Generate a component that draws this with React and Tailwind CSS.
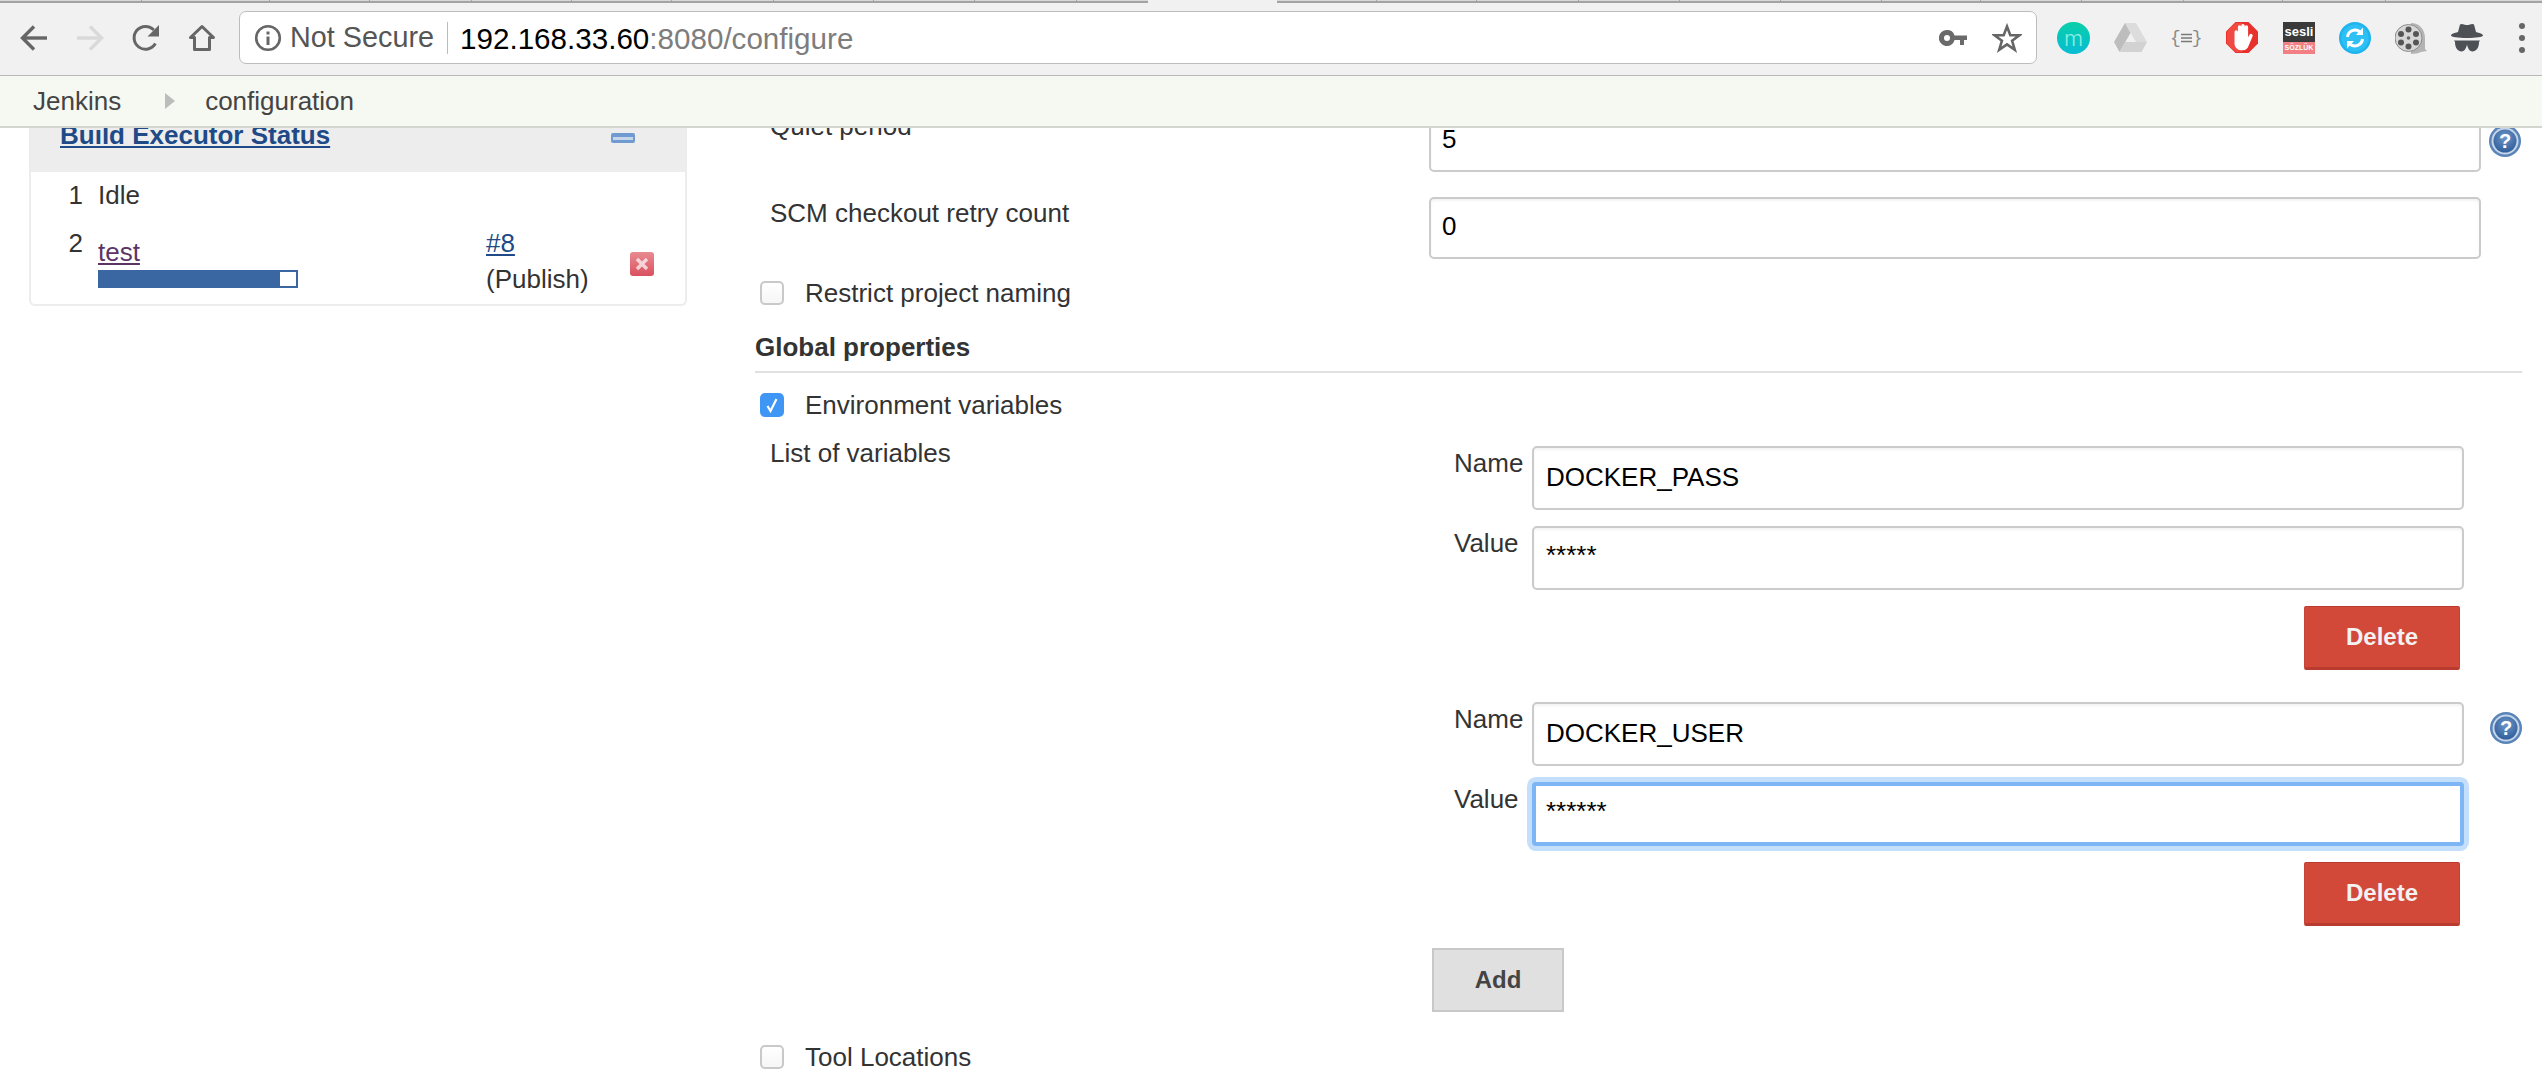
const FONT = "font-['Liberation_Sans',Arial,sans-serif]";

const TAB_ENDS = [142, 270, 370, 472, 572, 672, 774, 874, 975, 1077];
const TAB_ENDS_2 = [1377, 1477, 1579, 1680, 1781, 1882, 1981, 2082, 2184, 2283, 2386];

function TabStrip() {
  const seg = (ends, start) =>
    ends.map((e, i) => (
      <div
        key={e}
        className="h-[3px] shrink-0 bg-[#d8d8d8] border-b-2 border-r border-[#a3a3a3]"
        style={{ width: e - (i === 0 ? start : ends[i - 1]) }}
      />
    ));
  return (
    <div className="flex h-[3px] bg-[#f1f1f1]">
      {seg(TAB_ENDS, 0)}
      <div className="h-[3px] w-[71px] shrink-0 bg-[#d8d8d8] border-b-2 border-[#a3a3a3]" />
      <div className="h-[3px] w-[129px] shrink-0 bg-[#f1f1f1]" />
      {seg(TAB_ENDS_2, 1277)}
      <div className="h-[3px] flex-1 bg-[#d8d8d8] border-b-2 border-[#a3a3a3]" />
    </div>
  );
}

function Back({ color }) {
  return (
    <svg width="28" height="28" viewBox="0 0 28 28" fill="none" stroke={color} strokeWidth="3.4" className="shrink-0">
      <path d="M27 14H3" />
      <path d="M14 2.5L2.5 14L14 25.5" />
    </svg>
  );
}

function Forward({ color }) {
  return (
    <svg width="28" height="28" viewBox="0 0 28 28" fill="none" stroke={color} strokeWidth="3.4" className="shrink-0 ml-[28px]">
      <path d="M1 14H25" />
      <path d="M14 2.5L25.5 14L14 25.5" />
    </svg>
  );
}

function Reload() {
  return (
    <svg width="28" height="28" viewBox="0 0 28 28" fill="none" className="shrink-0 ml-[28px]">
      <path d="M23.4 19.5A11.4 11.4 0 1 1 21.8 6" stroke="#666" strokeWidth="3" />
      <path d="M27 1V12.5H15.5Z" fill="#666" />
    </svg>
  );
}

function Home() {
  return (
    <svg width="28" height="28" viewBox="0 0 28 28" fill="none" stroke="#666" strokeWidth="3" className="shrink-0 ml-[28px]">
      <path d="M2.5 13.5L14 2.5L25.5 13.5H21.5V25.5H6.5V13.5Z" strokeLinejoin="round" />
    </svg>
  );
}

function Info() {
  return (
    <svg width="28" height="28" viewBox="0 0 28 28" fill="none" className="shrink-0">
      <circle cx="14" cy="14" r="11.8" stroke="#666" strokeWidth="2.6" />
      <rect x="12.5" y="12.5" width="3" height="8.5" fill="#666" />
      <rect x="12.5" y="7.5" width="3" height="3" fill="#666" />
    </svg>
  );
}

function KeyIcon() {
  return (
    <svg width="28" height="16" viewBox="0 0 28 16" className="shrink-0">
      <path
        fillRule="evenodd"
        d="M8 0a8 8 0 0 1 7.6 5.4H28V10h-3v5h-4v-5h-5.4A8 8 0 1 1 8 0Zm0 5a3 3 0 1 0 0 6 3 3 0 0 0 0-6Z"
        fill="#6a6a6a"
      />
    </svg>
  );
}

function Star() {
  return (
    <svg width="30" height="30" viewBox="0 0 30 30" fill="none" stroke="#666" strokeWidth="2.6" className="shrink-0 ml-[25px]">
      <path d="M15 3.5L18.3 12.2H27.5L20.1 17.8L22.8 26.8L15 21.4L7.2 26.8L9.9 17.8L2.5 12.2H11.7Z" strokeLinejoin="miter" />
    </svg>
  );
}

function MIcon() {
  return (
    <div className="ml-[20px] flex h-[32px] w-[33px] shrink-0 items-center justify-center rounded-full bg-gradient-to-b from-[#0ccfa8] to-[#0bbcd4] text-[22px] leading-none font-light text-[#8eeee4] font-['Inter',sans-serif]">
      m
    </div>
  );
}

function DriveIcon() {
  return (
    <svg width="33" height="29" viewBox="0 0 33 29" className="ml-[24px] shrink-0">
      <path d="M11 0H22L33 19H22Z" fill="#dcdcdc" />
      <path d="M11 0L0 19L5.5 29L16.5 10Z" fill="#bdbdbd" />
      <path d="M5.5 29H27.5L33 19H11Z" fill="#d2d2d2" />
    </svg>
  );
}

function JsonIcon() {
  return (
    <div className="ml-[25px] flex h-[20px] w-[27px] shrink-0 items-center justify-between text-[18px] leading-none text-[#8a8a8a] font-['Liberation_Mono',monospace]">
      <span className="-ml-[2px]">{"{"}</span>
      <svg width="11" height="10" viewBox="0 0 11 10" stroke="#7a7a7a" strokeWidth="1.3" className="shrink-0">
        <path d="M0 1.5H11M0 5H11M0 8.5H11" />
      </svg>
      <span className="-mr-[2px]">{"}"}</span>
    </div>
  );
}

function AdBlock() {
  return (
    <svg width="32" height="31" viewBox="0 0 32 31" className="ml-[27px] shrink-0">
      <path d="M9.5 0H22.5L32 9.5V21.5L22.5 31H9.5L0 21.5V9.5Z" fill="#e8302c" />
      <path d="M9.5 1H16V30H9.5L1 21.5V9.5Z" fill="#f04a42" />
      <path
        d="M8.5 10a1.7 1.7 0 0 1 3.4 0V5a1.7 1.7 0 0 1 3.4 0V3.600a1.700 1.700 0 0 1 3.400 0V5a1.700 1.700 0 0 1 3.400 0v10.200l1.400-2.400a1.700 1.700 0 0 1 3 1.600L22.500 24a6 6 0 0 1-5.500 4.200H15a6.500 6.500 0 0 1-6.500-6.500Z"
        fill="#fff"
      />
    </svg>
  );
}

function Sesli() {
  return (
    <div className="ml-[25px] flex h-[32px] w-[32px] shrink-0 flex-col overflow-hidden font-['Liberation_Sans',sans-serif]">
      <div className="flex h-[20px] items-center justify-center bg-[#3a3a3a] text-[13px] leading-none font-bold text-white">sesli</div>
      <div className="flex h-[12px] items-center justify-center bg-[#f17f83] text-[7px] leading-none font-bold text-white">SÖZLÜK</div>
    </div>
  );
}

function Sync() {
  return (
    <svg width="32" height="32" viewBox="0 0 32 32" fill="none" className="ml-[24px] shrink-0">
      <circle cx="16" cy="16" r="16" fill="#1fb4ee" />
      <circle cx="16" cy="16" r="13.5" fill="#2cc0f4" />
      <path d="M8.5 15A7.6 7.6 0 0 1 21 10" stroke="#fff" strokeWidth="3" />
      <path d="M23.5 17A7.6 7.6 0 0 1 11 22" stroke="#fff" strokeWidth="3" />
      <path d="M24 5.5V13H17Z" fill="#fff" />
      <path d="M8 26.5V19H15Z" fill="#fff" />
    </svg>
  );
}

function Reel() {
  return (
    <svg width="32" height="32" viewBox="0 0 32 32" className="ml-[24px] shrink-0">
      <path d="M16 1C24 1 30 7 30 16V27L32 29L26 30C24 31 20 32 16 32Z" fill="#b4b4b4" />
      <circle cx="13.5" cy="16" r="13.5" fill="#d6d6d6" stroke="#8a8a8a" strokeWidth="1" />
      <circle cx="13.5" cy="16" r="1.8" fill="#666" />
      <circle cx="13.5" cy="7.5" r="3" fill="#555" />
      <circle cx="13.5" cy="24.5" r="3" fill="#555" />
      <circle cx="6" cy="12" r="3" fill="#555" />
      <circle cx="21" cy="12" r="3" fill="#555" />
      <circle cx="6" cy="20.5" r="3" fill="#555" />
      <circle cx="21" cy="20.5" r="3" fill="#555" />
    </svg>
  );
}

function Incognito() {
  return (
    <svg width="32" height="29" viewBox="0 0 32 29" className="ml-[24px] shrink-0" fill="#4d5054">
      <path d="M9 1.5C11 0 13 2 16 2S21 0 23 1.5L25 9C29 10 32 11 32 12.5C32 14 25 15 16 15S0 14 0 12.5C0 11 3 10 7 9Z" />
      <path d="M3 17.5H29L28 19C28 25 25 28.5 21.5 28.5C18 28.5 16.5 24 16 21.5C15.5 24 14 28.5 10.500 28.5C7 28.5 4 25 4 19Z" />
    </svg>
  );
}

function Dots() {
  return (
    <div className="ml-[36px] flex h-[30px] w-[7px] shrink-0 flex-col justify-between">
      <div className="h-[6px] w-[6px] rounded-full bg-[#666]" />
      <div className="h-[6px] w-[6px] rounded-full bg-[#666]" />
      <div className="h-[6px] w-[6px] rounded-full bg-[#666]" />
    </div>
  );
}

function Toolbar() {
  return (
    <div className="flex h-[72px] items-start bg-[#f1f1f1] pt-[8px]">
      <div className="flex h-[53px] items-center pl-[20px]">
        <Back color="#666" />
        <Forward color="#d9d9d9" />
        <Reload />
        <Home />
      </div>
      <div className="ml-[23px] flex h-[53px] w-[1798px] shrink-0 items-center rounded-[7px] border-[1.5px] border-[#bdbdbd] bg-white pl-[14px] pr-[14px]">
        <Info />
        <span className="ml-[8px] text-[28.8px] leading-none text-[#555]">Not Secure</span>
        <div className="ml-[13px] h-[32px] w-[1px] bg-[#bbb]" />
        <span className="ml-[12px] pt-[2px] text-[29.6px] leading-none text-black">
          192.168.33.60<span className="text-[#7d7d7d]">:8080/configure</span>
        </span>
        <div className="ml-auto flex items-center">
          <KeyIcon />
          <Star />
        </div>
      </div>
      <div className="flex h-[53px] items-center">
        <MIcon />
        <DriveIcon />
        <JsonIcon />
        <AdBlock />
        <Sesli />
        <Sync />
        <Reel />
        <Incognito />
        <Dots />
      </div>
    </div>
  );
}

function Breadcrumb() {
  return (
    <div className="flex h-[53px] items-center border-t border-t-[#b9b9b9] border-b-2 border-b-[#d3d6cf] bg-[#f6f8f2] pl-[33px] text-[26px] leading-none text-[#444]">
      <span>Jenkins</span>
      <svg width="10" height="16" viewBox="0 0 10 16" className="ml-[44px] shrink-0">
        <path d="M0 0L10 8L0 16Z" fill="#bcbcbc" />
      </svg>
      <span className="ml-[30px]">configuration</span>
    </div>
  );
}

function Help() {
  return (
    <svg width="32" height="32" viewBox="0 0 32 32" className="shrink-0">
      <defs>
        <radialGradient id="hg" cx="50%" cy="35%" r="70%">
          <stop offset="0%" stopColor="#6f97c8" />
          <stop offset="100%" stopColor="#2c5a98" />
        </radialGradient>
      </defs>
      <circle cx="16" cy="16" r="16" fill="#5a84b8" />
      <circle cx="16" cy="16" r="13.500" fill="#c4d5e9" />
      <circle cx="16" cy="16" r="11.500" fill="url(#hg)" />
      <text x="16" y="23" textAnchor="middle" fontSize="20" fontWeight="700" fill="#fff" fontFamily="Liberation Sans">?</text>
    </svg>
  );
}

function Sidebar() {
  return (
    <div className="w-[755px] shrink-0 pl-[29px]">
      <div className="-mt-[20px] h-[198px] w-[658px] rounded-b-[6px] border-x-2 border-b-2 border-[#ececec]">
        <div className="flex h-[64px] justify-between bg-[#ededed] pl-[29px] pr-[50px] pt-[12px]">
          <span className="text-[26px] leading-[30px] font-bold text-[#204a87] underline">Build Executor Status</span>
          <div className="mt-[13px] flex h-[10px] w-[24px] items-center rounded-[2px] bg-[#6f9bd0] px-[2px]">
            <div className="h-[3px] w-full bg-[#c5d6ea]" />
          </div>
        </div>
        <div className="flex pt-[8px] text-[26px] leading-[30px] text-[#333]">
          <div className="w-[52px] text-right">1</div>
          <div className="ml-[15px]">Idle</div>
        </div>
        <div className="mt-[18px] flex text-[26px] leading-[30px] text-[#333]">
          <div className="w-[52px] text-right">2</div>
          <div className="ml-[15px] w-[388px] pt-[9px]">
            <div className="text-[#5c3566] underline">test</div>
            <div className="mt-[3px] flex h-[18px] w-[200px] border-2 border-[#3a67a2] bg-white">
              <div className="h-full w-[180px] bg-[#3a67a2]" />
            </div>
          </div>
          <div className="w-[144px]">
            <div className="text-[#204a87] underline">#8</div>
            <div className="mt-[6px]">(Publish)</div>
          </div>
          <div className="mt-[24px] flex h-[24px] w-[24px] items-center justify-center rounded-[3px] bg-gradient-to-b from-[#e88a92] to-[#d9505f]">
            <svg width="14" height="14" viewBox="0 0 14 14" stroke="#fff" strokeWidth="3.500" opacity="0.7">
              <path d="M2 2L12 12M12 2L2 12" />
            </svg>
          </div>
        </div>
      </div>
    </div>
  );
}

function TextField({ value, kind }) {
  const base = "bg-white text-[26px] text-black outline-none font-['Liberation_Sans',sans-serif] shrink-0";
  const cls = {
    wide: "h-[62px] w-[1052px] rounded-[5px] border-2 border-[#cbcbcb] pl-[11px] pb-[3px] shadow-[inset_0_2px_3px_rgba(0,0,0,0.05)]",
    name: "h-[64px] w-[932px] rounded-[5px] border-2 border-[#cbcbcb] pl-[12px] pb-[2px] shadow-[inset_0_2px_3px_rgba(0,0,0,0.05)]",
    value: "h-[64px] w-[932px] rounded-[5px] border-2 border-[#cbcbcb] pl-[12px] pb-[6px] shadow-[inset_0_2px_3px_rgba(0,0,0,0.05)]",
    focus: "h-[64px] w-[932px] rounded-[4px] border-4 border-[#7db5f5] pl-[10px] pb-[6px] shadow-[0_0_0_5px_#c3dffc]",
  }[kind];
  return <input readOnly type="text" defaultValue={value} className={base + " " + cls} />;
}

function Check({ label, checked, className }) {
  return (
    <div className={"flex h-[24px] items-center pl-[5px] " + className}>
      {checked ? (
        <div className="flex h-[24px] w-[24px] shrink-0 items-center justify-center rounded-[5px] bg-[#3f96f4]">
          <svg width="14" height="16" viewBox="0 0 14 16" fill="none" stroke="#fff" strokeWidth="2.2">
            <path d="M2.500 9L5.500 14L11.500 2" />
          </svg>
        </div>
      ) : (
        <div className="h-[24px] w-[24px] shrink-0 rounded-[5px] border-2 border-[#c9c9c9] bg-gradient-to-b from-white to-[#f6f6f6]" />
      )}
      <span className="ml-[21px] text-[26px] leading-[30px] text-[#333]">{label}</span>
    </div>
  );
}

function Variable({ name, value, focus, help, top }) {
  return (
    <div className={"flex flex-col " + (top || "")}>
      <div className="flex">
        <div className="w-[103px] shrink-0 pl-[25px] pt-[2px] text-[26px] leading-[30px] text-[#333]">Name</div>
        <TextField value={name} kind="name" />
        {help && (
          <div className="ml-[26px] pt-[10px]">
            <Help />
          </div>
        )}
      </div>
      <div className="mt-[16px] flex">
        <div className="w-[103px] shrink-0 pl-[25px] pt-[2px] text-[26px] leading-[30px] text-[#333]">Value</div>
        <TextField value={value} kind={focus ? "focus" : "value"} />
      </div>
      <div className="mt-[16px] flex w-[1031px] justify-end">
        <button className="h-[64px] w-[156px] rounded-[2px] border-b-[3px] border-t border-x border-x-[#c44537] border-t-[#bb3b2f] border-b-[#b93a2f] bg-[#d24939] text-[24px] font-bold text-[#f2f2f2]">
          Delete
        </button>
      </div>
    </div>
  );
}

function Form() {
  return (
    <div className="min-w-0 flex-1 pr-[20px]">
      <div className="-mt-[18px] flex h-[62px]">
        <div className="w-[674px] shrink-0 pl-[15px] text-[26px] leading-[32px] text-[#333]">Quiet period</div>
        <TextField value="5" kind="wide" />
        <div className="ml-[8px] pt-[15px]">
          <Help />
        </div>
      </div>
      <div className="mt-[25px] flex h-[62px]">
        <div className="w-[674px] shrink-0 pl-[15px] text-[26px] leading-[32px] text-[#333]">SCM checkout retry count</div>
        <TextField value="0" kind="wide" />
      </div>
      <Check label="Restrict project naming" className="mt-[22px]" />
      <div className="mt-[26px] flex h-[42px] items-start border-b-2 border-[#e0e0e0]">
        <span className="text-[26px] leading-[32px] font-bold text-[#333]">Global properties</span>
      </div>
      <Check label="Environment variables" checked className="mt-[20px]" />
      <div className="mt-[20px] flex">
        <div className="w-[674px] shrink-0 pl-[15px] text-[26px] leading-[32px] text-[#333]">List of variables</div>
        <div className="pt-[9px]">
          <Variable name="DOCKER_PASS" value="*****" />
          <Variable name="DOCKER_USER" value="******" focus help top="mt-[32px]" />
          <button className="mt-[22px] ml-[3px] h-[64px] w-[132px] border-2 border-[#c8c8c8] bg-[#e0e0e0] text-[24px] font-bold text-[#444]">
            Add
          </button>
        </div>
      </div>
      <Check label="Tool Locations" className="mt-[33px]" />
    </div>
  );
}

export default function App() {
  return (
    <div className={"flex h-[1086px] w-full flex-col overflow-hidden bg-white " + FONT}>
      <TabStrip />
      <Toolbar />
      <Breadcrumb />
      <div className="flex min-h-0 flex-1 overflow-hidden">
        <Sidebar />
        <Form />
      </div>
    </div>
  );
}
